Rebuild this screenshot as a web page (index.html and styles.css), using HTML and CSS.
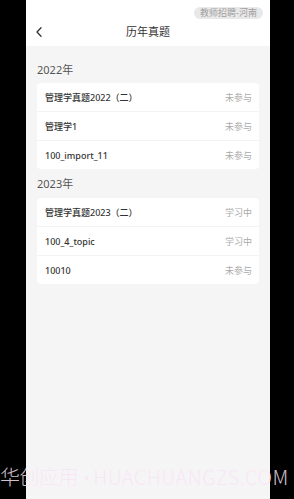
FILE: index.html
```html
<!DOCTYPE html>
<html lang="zh-CN">
<head>
<meta charset="utf-8">
<title>历年真题</title>
<link rel="stylesheet" href="styles.css">
</head>
<body>
<div class="phone">
  <header class="header">
    <div class="badge-row"><span class="badge">教师招聘-河南</span></div>
    <div class="nav">
      <svg class="back" width="8" height="10" viewBox="0 0 8 10"><path d="M6 0.8 L2 5 L6 9.2" fill="none" stroke="#333" stroke-width="1.3" stroke-linecap="round" stroke-linejoin="round"/></svg>
      <span class="title">历年真题</span>
    </div>
  </header>
  <div class="section-title first">2022年</div>
  <div class="card">
    <div class="row"><span class="name">管理学真题2022（二）</span><span class="status">未参与</span></div>
    <div class="row"><span class="name">管理学1</span><span class="status">未参与</span></div>
    <div class="row"><span class="name">100_import_11</span><span class="status">未参与</span></div>
  </div>
  <div class="section-title">2023年</div>
  <div class="card">
    <div class="row"><span class="name">管理学真题2023（二）</span><span class="status">学习中</span></div>
    <div class="row"><span class="name">100_4_topic</span><span class="status">学习中</span></div>
    <div class="row"><span class="name">10010</span><span class="status">未参与</span></div>
  </div>
</div>
<div class="watermark"><span class="wm-cn">华创应用</span><span class="wm-dot">•</span><span class="wm-en">HUACHUANGZS.COM</span></div>
</body>
</html>
```
FILE: styles.css
```css
html, body {
  margin: 0;
  padding: 0;
}
body {
  background: #000;
  width: 294px;
  height: 499px;
  overflow: hidden;
  position: relative;
  font-family: "Noto Sans", "Noto Sans CJK SC", sans-serif;
}
.phone {
  margin-left: 26px;
  width: 244px;
  height: 499px;
  background: #f5f5f5;
  display: flex;
  flex-direction: column;
}
.header {
  background: #fff;
  height: 46px;
  display: flex;
  flex-direction: column;
}
.badge-row {
  display: flex;
  justify-content: flex-end;
  padding: 7px 7px 0 0;
}
.badge {
  background: #e8e8e8;
  color: #9e9e9e;
  font-size: 9px;
  line-height: 12px;
  height: 12px;
  padding: 0 6px;
  border-radius: 6px;
  white-space: nowrap;
}
.nav {
  position: relative;
  display: flex;
  align-items: center;
  justify-content: center;
  height: 14px;
  margin-top: 6px;
}
.back {
  position: absolute;
  left: 9px;
  top: 2px;
}
.title {
  font-size: 11px;
  line-height: 14px;
  color: #333;
}
.section-title {
  font-size: 11px;
  line-height: 15px;
  color: #555;
  padding: 7px 11px 7px;
}
.section-title.first {
  padding-top: 16px;
  padding-bottom: 6px;
}
.card {
  margin: 0 11px;
  background: #fff;
  border-radius: 4px;
  display: flex;
  flex-direction: column;
}
.row {
  height: 28px;
  display: flex;
  align-items: center;
  justify-content: space-between;
  padding: 0 7px 0 8px;
  border-bottom: 1px solid #f3f3f3;
}
.row:last-child {
  border-bottom: none;
}
.name {
  font-size: 9px;
  color: #333;
  font-weight: 500;
}
.status {
  font-size: 9px;
  color: #aaa;
}
.watermark {
  position: absolute;
  left: 0;
  top: 465px;
  display: flex;
  align-items: baseline;
  font-family: "Noto Sans CJK SC", sans-serif;
  font-weight: 300;
  font-size: 20px;
  line-height: 24px;
  color: rgba(250, 228, 245, 0.85);
  white-space: nowrap;
}
.wm-cn {
  letter-spacing: -0.5px;
}
.wm-dot {
  font-family: "Noto Sans", sans-serif;
  font-size: 19px;
  margin: 0 3px 0 5px;
}
.wm-en {
  letter-spacing: 0.4px;
}
```
